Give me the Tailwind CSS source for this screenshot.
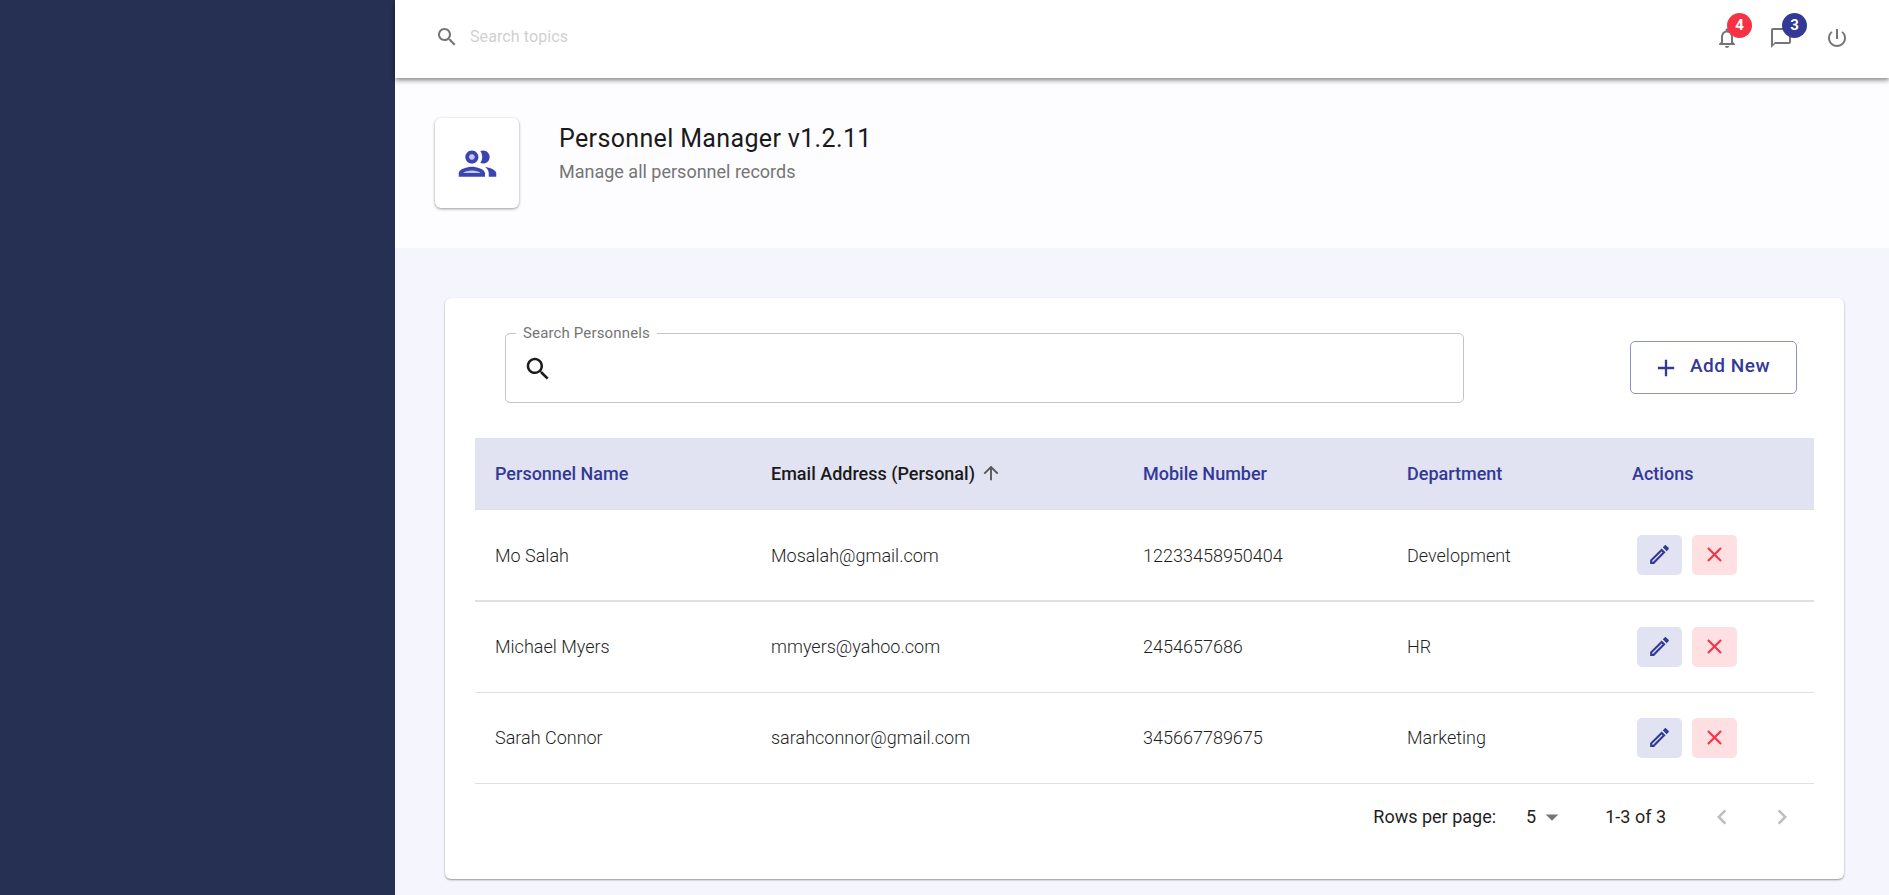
<!DOCTYPE html>
<html lang="en">
<head>
  <meta charset="UTF-8" />
  <title>Personnel Manager</title>
  <script src="https://cdn.jsdelivr.net/npm/@tailwindcss/browser@4"></script>
</head>
<body class="bg-[#f4f5fd] font-['Roboto',sans-serif] h-[895px] overflow-hidden flex">

  <aside class="w-[395px] h-full shrink-0 bg-[#253053]"></aside>

  <main class="flex-1 min-w-0 flex flex-col">
    <!-- top bar -->
    <header class="relative z-10 h-[78px] bg-white shadow-[0_2px_5px_rgba(0,0,0,0.5)] flex items-center pb-[2px] pl-[40px] pr-[40px]">
      <svg class="w-6 h-6 mb-[2px] fill-[#757575]" viewBox="0 0 24 24"><path d="M15.5 14h-.79l-.28-.27C15.41 12.59 16 11.11 16 9.5 16 5.91 13.09 3 9.5 3S3 5.91 3 9.5 5.91 16 9.5 16c1.61 0 3.09-.59 4.23-1.57l.27.28v.79l5 4.99L20.49 19l-4.99-5zm-6 0C7.01 14 5 11.99 5 9.5S7.01 5 9.5 5 14 7.01 14 9.5 11.99 14 9.5 14z"/></svg>
      <span class="ml-[11px] mb-[3px] text-[16px] tracking-[0.1px] text-[#d0d0d0]">Search topics</span>
      <div class="ml-auto flex items-center">
        <div class="relative w-6 h-6">
          <svg class="w-6 h-6 fill-[#757575]" viewBox="0 0 24 24"><path d="M12 22c1.1 0 2-.9 2-2h-4c0 1.1.9 2 2 2zm6-6v-5c0-3.07-1.63-5.64-4.5-6.32V4c0-.83-.67-1.5-1.5-1.5s-1.5.67-1.5 1.5v.68C7.64 5.36 6 7.92 6 11v5l-2 2v1h16v-1l-2-2zm-2 1H8v-6c0-2.48 1.51-4.5 4-4.5s4 2.02 4 4.5v6z"/></svg>
          <span class="absolute left-[12px] top-[-13px] w-[25px] h-[25px] rounded-full bg-[#f83245] text-white text-[15px] font-bold flex items-center justify-center">4</span>
        </div>
        <div class="relative w-6 h-6 ml-[30px]">
          <svg class="w-6 h-6 fill-[#757575]" viewBox="0 0 24 24"><path d="M20 2H4c-1.1 0-2 .9-2 2v18l4-4h14c1.1 0 2-.9 2-2V4c0-1.1-.9-2-2-2zm0 14H6l-2 2V4h16v12z"/></svg>
          <span class="absolute left-[13px] top-[-13px] w-[25px] h-[25px] rounded-full bg-[#333996] text-white text-[15px] font-bold flex items-center justify-center">3</span>
        </div>
        <svg class="w-6 h-6 ml-[32px] fill-[#757575]" viewBox="0 0 24 24"><path d="M13 3h-2v10h2V3zm4.83 2.17l-1.42 1.42C17.99 7.86 19 9.81 19 12c0 3.87-3.13 7-7 7s-7-3.13-7-7c0-2.19 1.01-4.14 2.58-5.42L6.17 5.17C4.23 6.82 3 9.26 3 12c0 4.97 4.03 9 9 9s9-4.03 9-9c0-2.74-1.23-5.18-3.17-6.83z"/></svg>
      </div>
    </header>

    <!-- page heading -->
    <section class="h-[170px] bg-[#fdfdff] pl-[40px] pt-[40px] flex items-start">
      <div class="w-[84px] h-[90px] bg-white rounded-[6px] shadow-[0_1px_3px_rgba(0,0,0,0.4)] flex items-center justify-center">
        <svg class="w-[45px] h-[45px] fill-[#3c44b1]" viewBox="0 0 24 24">
          <circle cx="9" cy="8.5" r="1.5" opacity=".3"/>
          <path opacity=".3" d="M4.34 17h9.32c-.84-.58-2.87-1.25-4.66-1.25s-3.82.67-4.66 1.25z"/>
          <path d="M9 13.75c-2.34 0-7 1.17-7 3.5V19h14v-1.75c0-2.33-4.66-3.5-7-3.5zM4.34 17c.84-.58 2.87-1.25 4.66-1.25s3.82.67 4.66 1.25H4.34zM9 12c1.93 0 3.5-1.57 3.5-3.5S10.93 5 9 5 5.5 6.57 5.5 8.5 7.07 12 9 12zm0-5c.83 0 1.5.67 1.5 1.5S9.83 10 9 10s-1.5-.67-1.5-1.5S8.17 7 9 7zm7.04 6.81c1.16.84 1.96 1.96 1.96 3.44V19h4v-1.75c0-2.02-3.5-3.17-5.96-3.44zM15 12c1.93 0 3.5-1.57 3.5-3.5S16.93 5 15 5c-.54 0-1.04.13-1.5.35.63.89 1 1.98 1 3.15s-.37 2.26-1 3.15c.46.22.96.35 1.5.35z"/>
        </svg>
      </div>
      <div class="ml-[40px] pt-[3px]">
        <h1 class="text-[25px] leading-[36px] font-normal text-[#1a1a1a] tracking-[0.35px]">Personnel Manager v1.2.11</h1>
        <p class="text-[18px] leading-[24px] mt-[3px] text-[#757575]">Manage all personnel records</p>
      </div>
    </section>

    <!-- card -->
    <section class="ml-[50px] mr-[45px] mt-[50px] h-[581px] bg-white rounded-[6px] shadow-[0_1px_2px_rgba(0,0,0,0.4)] px-[30px]">
      <div class="flex items-start">
        <fieldset class="ml-[30px] mt-[28px] w-[959px] h-[77px] border border-[#c4c4c4] rounded-[5px] pl-[10px] flex">
          <legend class="px-[7px] text-[15px] leading-[15px] tracking-[0.15px] text-[#757575]">Search Personnels</legend>
          <div class="flex items-center h-full pb-[6px]">
            <svg class="ml-[7px] w-[30px] h-[30px] fill-[#1a1a1a]" viewBox="0 0 24 24"><path d="M15.5 14h-.79l-.28-.27C15.41 12.59 16 11.11 16 9.5 16 5.91 13.09 3 9.5 3S3 5.91 3 9.5 5.91 16 9.5 16c1.61 0 3.09-.59 4.23-1.57l.27.28v.79l5 4.99L20.49 19l-4.99-5zm-6 0C7.01 14 5 11.99 5 9.5S7.01 5 9.5 5 14 7.01 14 9.5 11.99 14 9.5 14z"/></svg>
          </div>
        </fieldset>
        <button class="ml-[166px] mt-[43px] w-[167px] h-[53px] border border-[#8e92c8] rounded-[5px] text-[#333996] flex items-center pl-[21px] gap-[10px] text-[19px] font-medium tracking-[0.5px]">
          <svg class="w-7 h-7 fill-[#333996]" viewBox="0 0 24 24"><path d="M19 13h-6v6h-2v-6H5v-2h6V5h2v6h6v2z"/></svg>
          <span class="-mt-[2px]">Add New</span>
        </button>
      </div>

      <table class="mt-[35px] w-full table-fixed border-collapse text-[18px]">
        <colgroup>
          <col class="w-[276px]" /><col class="w-[372px]" /><col class="w-[264px]" /><col class="w-[225px]" /><col />
        </colgroup>
        <thead class="bg-[#e1e2f2]">
          <tr class="h-[71px] border-b border-[#e0e0e0] font-medium text-[#333996] text-left">
            <th class="pl-[20px] font-medium">Personnel Name</th>
            <th class="pl-[20px] font-medium text-[#1a1a1a]">
              <span class="flex items-center gap-[5px]">Email Address (Personal)
                <svg class="w-[22px] h-[22px] fill-[#555]" viewBox="0 0 24 24"><path d="M4 12l1.41 1.41L11 7.83V20h2V7.83l5.58 5.59L20 12l-8-8-8 8z"/></svg>
              </span>
            </th>
            <th class="pl-[20px] font-medium">Mobile Number</th>
            <th class="pl-[20px] font-medium">Department</th>
            <th class="pl-[20px] font-medium">Actions</th>
          </tr>
        </thead>
        <tbody class="font-light text-[#1f1f1f]">
          <tr class="h-[92px] border-b-2 border-[#e0e0e0]">
            <td class="pl-[20px] pt-[2px]">Mo Salah</td>
            <td class="pl-[20px] pt-[2px]">Mosalah@gmail.com</td>
            <td class="pl-[20px] pt-[2px]">12233458950404</td>
            <td class="pl-[20px] pt-[2px]">Development</td>
            <td class="pl-[25px]">
              <div class="flex gap-[10px]">
                <button class="w-[45px] h-[40px] rounded-[5px] bg-[#e1e2f2] flex items-center justify-center">
                  <svg class="w-[25px] h-[25px] fill-[#333996]" viewBox="0 0 24 24"><path d="M3 17.25V21h3.75L17.81 9.94l-3.75-3.75L3 17.25zM5.92 19H5v-.92l9.06-9.06.92.92L5.92 19zM20.71 5.63l-2.34-2.34c-.39-.39-1.02-.39-1.41 0l-1.83 1.83 3.75 3.75 1.83-1.83c.39-.39.39-1.02 0-1.41z"/></svg>
                </button>
                <button class="w-[45px] h-[40px] rounded-[5px] bg-[#fedfe2] flex items-center justify-center">
                  <svg class="w-[25px] h-[25px] fill-[#f83245]" viewBox="0 0 24 24"><path d="M19 6.41L17.59 5 12 10.59 6.41 5 5 6.41 10.59 12 5 17.59 6.41 19 12 13.41 17.59 19 19 17.59 13.41 12z"/></svg>
                </button>
              </div>
            </td>
          </tr>
          <tr class="h-[91px] border-b border-[#e0e0e0]">
            <td class="pl-[20px]">Michael Myers</td>
            <td class="pl-[20px]">mmyers@yahoo.com</td>
            <td class="pl-[20px]">2454657686</td>
            <td class="pl-[20px]">HR</td>
            <td class="pl-[25px]">
              <div class="flex gap-[10px]">
                <button class="w-[45px] h-[40px] rounded-[5px] bg-[#e1e2f2] flex items-center justify-center">
                  <svg class="w-[25px] h-[25px] fill-[#333996]" viewBox="0 0 24 24"><path d="M3 17.25V21h3.75L17.81 9.94l-3.75-3.75L3 17.25zM5.92 19H5v-.92l9.06-9.06.92.92L5.92 19zM20.71 5.63l-2.34-2.34c-.39-.39-1.02-.39-1.41 0l-1.83 1.83 3.75 3.75 1.83-1.83c.39-.39.39-1.02 0-1.41z"/></svg>
                </button>
                <button class="w-[45px] h-[40px] rounded-[5px] bg-[#fedfe2] flex items-center justify-center">
                  <svg class="w-[25px] h-[25px] fill-[#f83245]" viewBox="0 0 24 24"><path d="M19 6.41L17.59 5 12 10.59 6.41 5 5 6.41 10.59 12 5 17.59 6.41 19 12 13.41 17.59 19 19 17.59 13.41 12z"/></svg>
                </button>
              </div>
            </td>
          </tr>
          <tr class="h-[91px] border-b border-[#e0e0e0]">
            <td class="pl-[20px]">Sarah Connor</td>
            <td class="pl-[20px]">sarahconnor@gmail.com</td>
            <td class="pl-[20px]">345667789675</td>
            <td class="pl-[20px]">Marketing</td>
            <td class="pl-[25px]">
              <div class="flex gap-[10px]">
                <button class="w-[45px] h-[40px] rounded-[5px] bg-[#e1e2f2] flex items-center justify-center">
                  <svg class="w-[25px] h-[25px] fill-[#333996]" viewBox="0 0 24 24"><path d="M3 17.25V21h3.75L17.81 9.94l-3.75-3.75L3 17.25zM5.92 19H5v-.92l9.06-9.06.92.92L5.92 19zM20.71 5.63l-2.34-2.34c-.39-.39-1.02-.39-1.41 0l-1.83 1.83 3.75 3.75 1.83-1.83c.39-.39.39-1.02 0-1.41z"/></svg>
                </button>
                <button class="w-[45px] h-[40px] rounded-[5px] bg-[#fedfe2] flex items-center justify-center">
                  <svg class="w-[25px] h-[25px] fill-[#f83245]" viewBox="0 0 24 24"><path d="M19 6.41L17.59 5 12 10.59 6.41 5 5 6.41 10.59 12 5 17.59 6.41 19 12 13.41 17.59 19 19 17.59 13.41 12z"/></svg>
                </button>
              </div>
            </td>
          </tr>
        </tbody>
      </table>

      <!-- pagination -->
      <div class="h-[66px] flex items-center justify-end text-[18px] text-[#1f1f1f] pr-[17px]">
        <span>Rows per page:</span>
        <span class="ml-[30px]">5</span>
        <svg class="w-[30px] h-[30px] fill-[#757575] ml-[1px]" viewBox="0 0 24 24"><path d="M7 10l5 5 5-5z"/></svg>
        <span class="ml-[38px]">1-3 of 3</span>
        <svg class="w-[30px] h-[30px] fill-[#bdbdbd] ml-[41px]" viewBox="0 0 24 24"><path d="M15.41 7.41 14 6l-6 6 6 6 1.41-1.41L10.83 12z"/></svg>
        <svg class="w-[30px] h-[30px] fill-[#bdbdbd] ml-[30px]" viewBox="0 0 24 24"><path d="M10 6 8.59 7.41 13.17 12l-4.58 4.59L10 18l6-6z"/></svg>
      </div>
    </section>
  </main>

</body>
</html>
